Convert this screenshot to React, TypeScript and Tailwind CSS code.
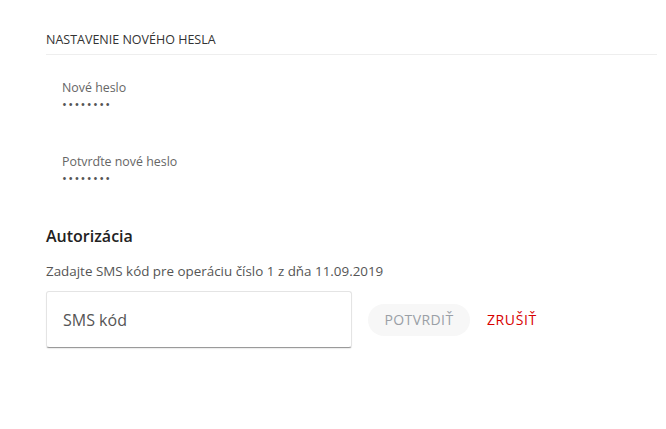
export default function App() {
  return (
    <div className="w-[666px] h-[429px] bg-white font-['Open_Sans',sans-serif] pl-[46px] pr-[9px] pt-[32px]">
      {/* Header */}
      <div className="border-b border-[#eeeeee] pb-[6px]">
        <h3 className="text-[12.5px] leading-[16px] text-[#333333] uppercase">Nastavenie nového hesla</h3>
      </div>

      {/* Password fields */}
      <div className="pl-[16px] pt-[25px]">
        <div className="h-[74px]">
          <div className="text-[12.4px] leading-[16px] text-[#666666]">Nové heslo</div>
          <div className="text-[13px] leading-[14px] text-[#555555] tracking-[1.3px] mt-[1px]">••••••••</div>
        </div>
        <div>
          <div className="text-[12.4px] leading-[16px] text-[#666666]">Potvrďte nové heslo</div>
          <div className="text-[13px] leading-[14px] text-[#555555] tracking-[1.3px] mt-[1px]">••••••••</div>
        </div>
      </div>

      {/* Authorization */}
      <div className="mt-[40px]">
        <h2 className="text-[16px] leading-[22px] font-semibold text-[#222222]">Autorizácia</h2>
        <p className="text-[13.4px] leading-[20px] text-[#555555] mt-[14px]">
          Zadajte SMS kód pre operáciu číslo 1 z dňa 11.09.2019
        </p>
        <div className="flex items-center mt-[10px]">
          <input
            placeholder="SMS kód"
            className="w-[306px] h-[57px] rounded-[3px] border border-[#e4e4e4] border-b-[#9a9a9a] shadow-[0_1px_1px_rgba(0,0,0,0.08)] px-[16px] text-[16px] text-[#444444] placeholder:text-[#555555] outline-none"
          />
          <button className="ml-[16px] h-[32px] w-[102px] rounded-full bg-[#f7f7f7] text-[14px] font-medium tracking-[0.4px] text-[#9a9fa6]">
            POTVRDIŤ
          </button>
          <button className="ml-[17px] text-[14px] font-medium tracking-[0.6px] text-[#d80000]">
            ZRUŠIŤ
          </button>
        </div>
      </div>
    </div>
  );
}
